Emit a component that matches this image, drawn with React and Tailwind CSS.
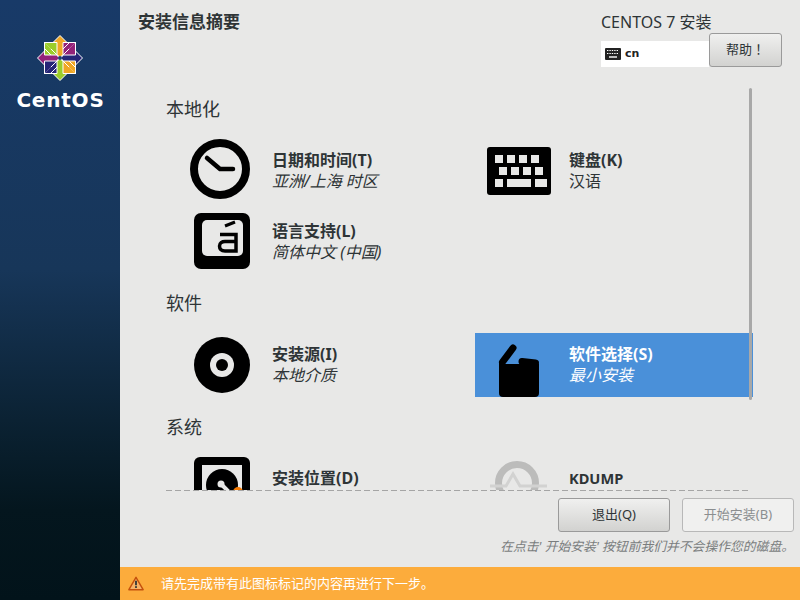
const cjk = "font-['Noto_Sans','Noto_Sans_CJK_SC',sans-serif]";

const CentosLogo = () => {
  const squares = ["#9ccd2a", "#932279", "#efa724", "#262577"];
  const arrows = ["#efa724", "#262577", "#9ccd2a", "#932279"];
  return (
    <svg width="46" height="46" viewBox="0 0 46 46">
      <rect x="7" y="7" width="32" height="32" fill="#fff" />
      {squares.map((c, i) => (
        <g key={i} transform={`rotate(${i * 90} 23 23)`}>
          <path d="M8 8H21V21Z" fill={c} />
          <path d="M8 8V21H21Z" fill={c} />
          <path d="M8 14L15 21M21 21L14 14" stroke="#fff" strokeWidth="1" />
        </g>
      ))}
      {arrows.map((c, i) => (
        <g key={i} transform={`rotate(${i * 90} 23 23)`}>
          <path d="M23 0.5L30 7.5H26V20L23 22L20 20V7.5H16Z" fill={c} stroke="#fff" strokeWidth="1" />
        </g>
      ))}
      <circle cx="23" cy="23" r="2" fill="#1c3d6e" />
    </svg>
  );
};

const ClockIcon = () => (
  <svg width="60" height="60" viewBox="0 0 60 60" className="mr-[4px]">
    <circle cx="30" cy="30" r="26" fill="none" stroke="#000" strokeWidth="8" />
    <path d="M17 19L30 30H43" fill="none" stroke="#000" strokeWidth="4.5" strokeLinecap="round" strokeLinejoin="round" />
  </svg>
);

const KeyboardIcon = () => (
  <svg width="64" height="48" viewBox="0 0 64 48" className="mt-[4px]">
    <rect width="64" height="48" rx="3" fill="#000" />
    <g fill="#e8e8e7">
      <rect x="8" y="8" width="8" height="8" />
      <rect x="20" y="8" width="8" height="8" />
      <rect x="32" y="8" width="8" height="8" />
      <rect x="44" y="8" width="8" height="8" />
      <rect x="12" y="20" width="8" height="8" />
      <rect x="24" y="20" width="8" height="8" />
      <rect x="36" y="20" width="8" height="8" />
      <rect x="48" y="20" width="8" height="8" />
      <rect x="8" y="32" width="8" height="8" />
      <rect x="20" y="32" width="24" height="8" />
      <rect x="48" y="32" width="12" height="8" />
    </g>
  </svg>
);

const LanguageIcon = () => (
  <svg width="56" height="56" viewBox="0 0 56 56">
    <rect width="56" height="56" rx="7" fill="#000" />
    <rect x="8" y="7" width="41" height="36" rx="5" fill="#e8e8e7" />
    <path d="M31 13L41 9" stroke="#000" strokeWidth="3" fill="none" />
    <path d="M26 21.5H42V38H31C27 38 25.5 35.5 25.5 33C25.5 30 28 28.5 31 28.5H42" stroke="#000" strokeWidth="3.5" fill="none" />
  </svg>
);

const DiscIcon = () => (
  <svg width="56" height="56" viewBox="0 0 56 56">
    <circle cx="28" cy="28" r="28" fill="#000" />
    <circle cx="28" cy="28" r="12" fill="#e8e8e7" />
    <circle cx="28" cy="28" r="6" fill="#000" />
  </svg>
);

const PackageIcon = () => (
  <svg width="56" height="64" viewBox="0 0 56 64">
    <rect x="8" y="31" width="40" height="33" rx="4" fill="#000" />
    <rect x="8" y="31" width="40" height="8" fill="#000" />
    <path d="M11.5 29L22 15" stroke="#000" strokeWidth="7" strokeLinecap="round" fill="none" />
    <path d="M31 28.5L44.5 30" stroke="#000" strokeWidth="7" strokeLinecap="round" fill="none" />
    <path d="M8 31V29L12 29V31Z" fill="#000" />
  </svg>
);

const DiskIcon = () => (
  <svg width="56" height="56" viewBox="0 0 56 56">
    <rect width="56" height="56" rx="6" fill="#000" />
    <rect x="8" y="8" width="40" height="40" fill="#e8e8e7" />
    <circle cx="28" cy="28" r="16" fill="#000" />
    <path d="M28 28L36 36" stroke="#e8e8e7" strokeWidth="4" strokeLinecap="round" />
    <circle cx="27" cy="27" r="3.5" fill="#e8e8e7" />
    <circle cx="44" cy="35" r="5" fill="#f57900" />
  </svg>
);

const KdumpIcon = () => (
  <svg width="60" height="56" viewBox="0 0 60 56">
    <circle cx="28" cy="26" r="18.5" fill="none" stroke="#bcbcbb" strokeWidth="7" />
    <path d="M1 29H17L24 17L31 29H58" fill="none" stroke="#d2d2d1" strokeWidth="3" />
  </svg>
);

const WarningIcon = () => (
  <svg width="16" height="15" viewBox="0 0 18 16">
    <path d="M9 1L17 15H1Z" fill="#f7b267" stroke="#c4500c" strokeWidth="1.6" strokeLinejoin="round" />
    <path d="M9 5V10" stroke="#2e3436" strokeWidth="2" />
    <rect x="8" y="11" width="2" height="2" fill="#2e3436" />
  </svg>
);

const KeyGlyph = () => (
  <svg width="16" height="12" viewBox="0 0 16 12">
    <rect width="16" height="12" rx="1" fill="#222" />
    <path d="M2 2.5H14M2 5.5H14" stroke="#fff" strokeWidth="1.2" strokeDasharray="1.4 1" />
    <path d="M4 9H12" stroke="#fff" strokeWidth="1.4" />
  </svg>
);

const Spoke = ({ icon, title, status, selected, textClass = "", statusClass = "italic" }) => (
  <div className={`flex items-center h-16 ${selected ? "bg-[#4a90d9] text-white" : "text-[#2e3436]"}`}>
    <div className="w-[88px] flex justify-center shrink-0">{icon}</div>
    <div className={`ml-[6px] leading-[21px] ${textClass}`}>
      <div className="text-[16px] font-bold whitespace-nowrap">{title}</div>
      {status && <div className={`text-[16px] whitespace-nowrap ${statusClass}`}>{status}</div>}
    </div>
  </div>
);

const Btn = ({ children, disabled }) => (
  <button className={`w-[112px] h-[34px] rounded-[3px] border text-[13px] ${disabled ? "bg-[#f0f0ef] border-[#b8b8b8] text-[#8b8e8f]" : "bg-gradient-to-b from-[#f0f0ef] to-[#d2d2d0] border-[#9a9a9a] text-[#2e3436]"}`}>
    {children}
  </button>
);

export default function App() {
  return (
    <div className={`flex w-[800px] h-[600px] overflow-hidden bg-[#e8e8e7] ${cjk}`}>
      {/* sidebar */}
      <div className="w-[120px] shrink-0 flex flex-col items-center pt-[35px] bg-[linear-gradient(#183a68_0%,#173659_45%,#0b2233_70%,#04161e_85%,#02131a_100%)]">
        <CentosLogo />
        <div className="mt-[4px] ml-px text-white text-[20px] font-bold leading-[30px] tracking-[0.8px] font-['DejaVu_Sans',sans-serif]">CentOS</div>
      </div>

      <div className="flex-1 flex flex-col min-w-0">
        {/* header */}
        <div className="h-[88px] shrink-0 flex justify-between pl-[18px] pr-[18px] pt-[10px]">
          <div className="text-[17px] font-bold text-[#2e3436] leading-6">安装信息摘要</div>
          <div className="w-[181px] -mt-px">
            <div className="h-6 text-[16px] text-[#2e3436] leading-[26px]">CENTOS 7 安装</div>
            <div className="flex items-end">
              <div className="w-[108px] h-[26px] bg-white flex items-center gap-[4px] pl-[4px] text-[11px] font-bold text-[#222] font-['DejaVu_Sans',sans-serif]">
                <KeyGlyph />
                <span>cn</span>
              </div>
              <button className="w-[73px] h-[34px] pb-[2px] rounded-[3px] border border-[#9a9a9a] bg-gradient-to-b from-[#f0f0ef] to-[#d2d2d0] text-[13px] text-[#2e3436] font-['Noto_Sans_CJK_JP','Noto_Sans_CJK_SC',sans-serif]">帮助！</button>
            </div>
          </div>
        </div>

        {/* spokes */}
        <div className="relative h-[402px] shrink-0 overflow-hidden pl-[46px] pt-[9px]">
          <div className="text-[18px] text-[#2e3436] leading-6 mb-4">本地化</div>
          <div className="ml-[12px] grid grid-cols-[278px_278px] gap-x-[19px] gap-y-2">
            <Spoke icon={<ClockIcon />} title="日期和时间(T)" status="亚洲/上海 时区" textClass="pt-[4px]" />
            <Spoke icon={<KeyboardIcon />} title="键盘(K)" status="汉语" textClass="pt-[4px]" statusClass="not-italic" />
            <Spoke icon={<LanguageIcon />} title="语言支持(L)" status="简体中文 (中国)" textClass="pt-[2px]" />
          </div>
          <div className="text-[18px] text-[#2e3436] leading-6 mt-[18px] mb-[18px]">软件</div>
          <div className="ml-[12px] grid grid-cols-[278px_278px] gap-x-[19px]">
            <Spoke icon={<DiscIcon />} title="安装源(I)" status="本地介质" />
            <Spoke icon={<PackageIcon />} title="软件选择(S)" status="最小安装" selected />
          </div>
          <div className="text-[18px] text-[#2e3436] leading-6 mt-[18px] mb-[14px]">系统</div>
          <div className="ml-[12px] grid grid-cols-[278px_278px] gap-x-[19px]">
            <Spoke icon={<DiskIcon />} title="安装位置(D)" textClass="pb-[14px]" />
            <Spoke icon={<KdumpIcon />} title={<span className="text-[14.6px]">KDUMP</span>} textClass="pb-[14px]" />
          </div>
          {/* overlay scrollbar */}
          <div className="absolute left-[629px] top-0 w-[3px] h-[312px] rounded-full bg-[#a8a8a8]" />
        </div>

        {/* footer */}
        <div className="flex-1 flex flex-col items-end pr-[6px]">
          <div className="self-stretch ml-[46px] mr-[44px] h-px bg-[repeating-linear-gradient(90deg,#a5a5a5_0_6px,transparent_6px_9px)]" />
          <div className="flex gap-3 mt-[7px]">
            <Btn>退出(Q)</Btn>
            <Btn disabled>开始安装(B)</Btn>
          </div>
          <div className="mt-[4px] text-[12.8px] italic text-[#7a7d7e] leading-5">在点击' 开始安装' 按钮前我们并不会操作您的磁盘。</div>
        </div>

        {/* warning bar */}
        <div className="h-[33px] shrink-0 flex items-center pl-[8px] bg-[#fcac3c] text-white text-[13px]">
          <WarningIcon />
          <span className="ml-[17px]">请先完成带有此图标标记的内容再进行下一步。</span>
        </div>
      </div>
    </div>
  );
}
